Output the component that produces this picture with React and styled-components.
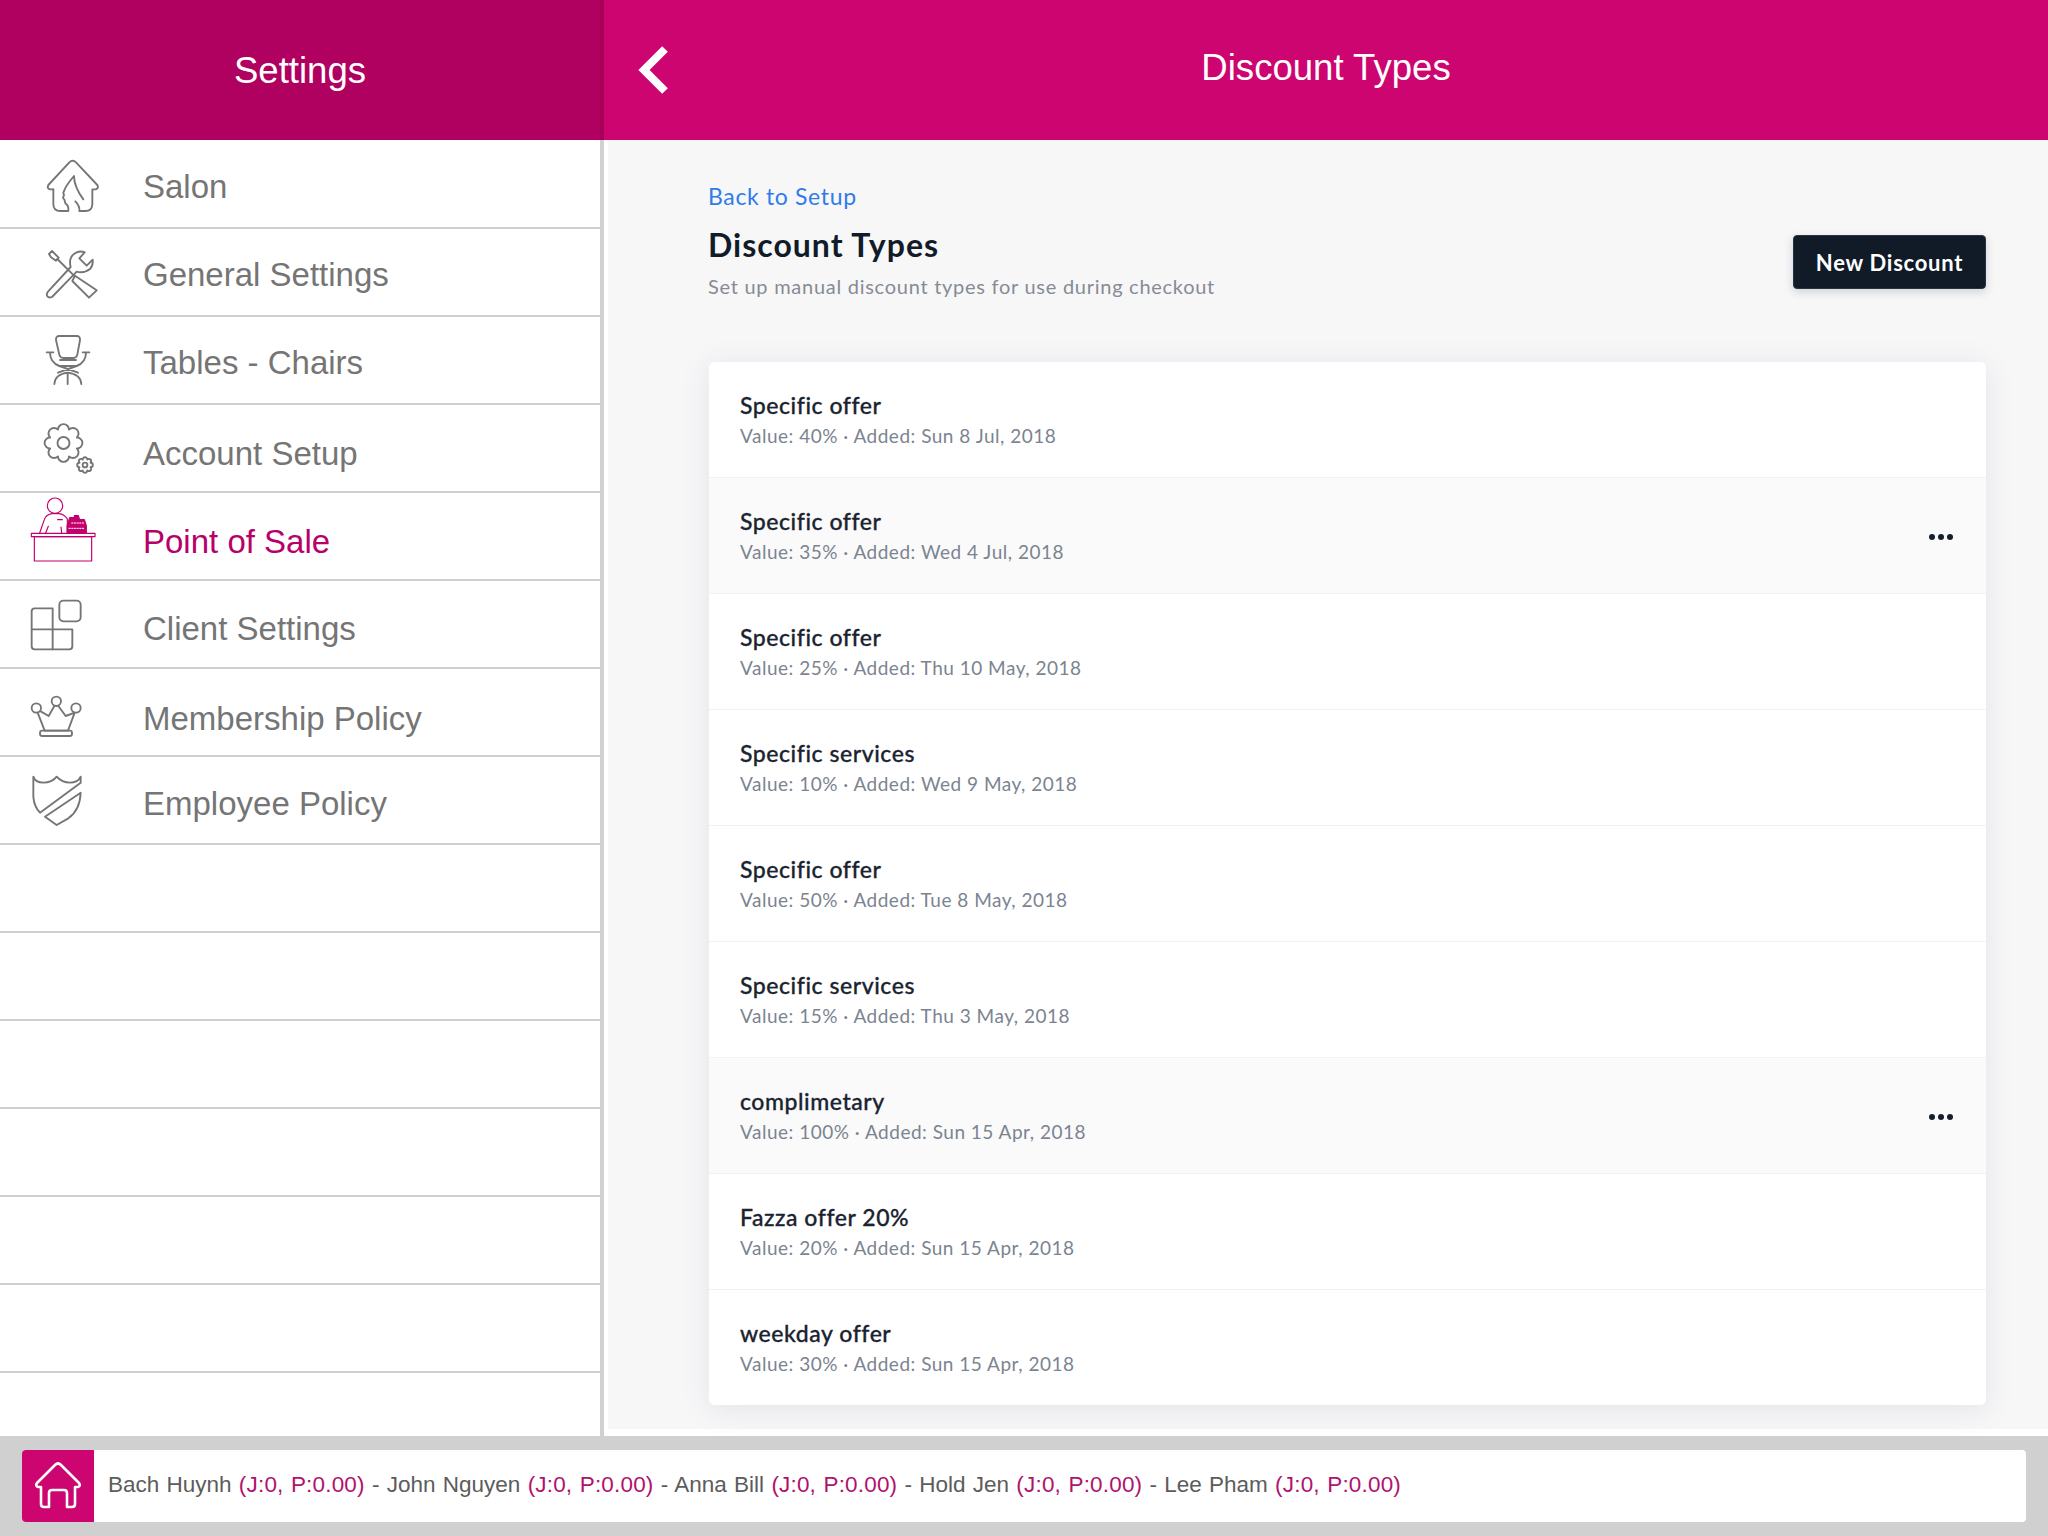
import React from "react";
import styled, { createGlobalStyle } from "styled-components";

const GlobalStyle = createGlobalStyle`
  html, body { margin: 0; padding: 0; background: #fff; }
  * { box-sizing: border-box; }
`;

const ui = `"Liberation Sans", Arial, sans-serif`;
const soft = `Lato, "Open Sans", sans-serif`;

const Page = styled.div`
  width: 2048px;
  height: 1536px;
  display: grid;
  grid-template-rows: 140px 1296px 100px;
  overflow: hidden;
  font-family: ${ui};
`;

const Header = styled.header`
  display: grid;
  grid-template-columns: 604px 1fr;
`;

const HeaderLeft = styled.div`
  display: flex;
  align-items: center;
  justify-content: center;
  background: #b00060;
  border-right: 4px solid #a80059;
  color: #fff;
  font-size: 36.6px;
  padding-top: 1px;
`;

const HeaderRight = styled.div`
  position: relative;
  display: flex;
  align-items: center;
  justify-content: center;
  background: #cc0570;
  color: #fff;
  font-size: 36.6px;
  padding-bottom: 5px;
`;

const BackArrow = styled.svg`
  position: absolute;
  left: 30px;
  top: 44px;
  width: 40px;
  height: 54px;
`;

const Body = styled.div`
  display: grid;
  grid-template-columns: 604px 1fr;
  min-height: 0;
`;

const Sidebar = styled.nav`
  border-right: 4px solid #d0d0d0;
  background: #fff;
  padding-top: 1px;
  overflow: hidden;
`;

const NavRow = styled.div`
  height: 88px;
  display: flex;
  align-items: center;
  border-bottom: 2px solid #cfcfcf;
`;

const NavIcon = styled.svg`
  flex: none;
  width: 143px;
  height: 88px;
  margin-top: -1px;
  fill: none;
  stroke: ${(p) => (p.$active ? "#c4006c" : "#757575")};
  stroke-width: ${(p) => p.$sw || 5.6};
  stroke-linecap: round;
  stroke-linejoin: round;
`;

const NavLabel = styled.span`
  font-size: 33px;
  color: ${(p) => (p.$active ? "#b8006a" : "#757575")};
  padding-top: ${(p) => p.$nudge}px;
`;

const MainWrap = styled.div`
  background: #fff;
  padding: 0 0 7px 4px;
  min-height: 0;
`;

const Main = styled.main`
  height: 100%;
  background: #f7f7f8;
  padding: 0 62px 0 101px;
  font-family: ${soft};
`;

const PageHead = styled.div`
  display: flex;
  justify-content: space-between;
  align-items: flex-start;
  height: 222px;
  padding-top: 41px;
`;

const BackLink = styled.a`
  display: block;
  margin-left: -1px;
  font-size: 23px;
  line-height: 30px;
  letter-spacing: 0.65px;
  color: #2f7ce8;
`;

const Title = styled.h1`
  margin: 15px 0 0 -1px;
  font-size: 32px;
  line-height: 38px;
  font-weight: 700;
  letter-spacing: 1px;
  color: #121b28;
`;

const Subtitle = styled.p`
  margin: 8px 0 0 -1px;
  font-size: 20px;
  line-height: 28px;
  letter-spacing: 0.73px;
  color: #868b94;
`;

const NewButton = styled.button`
  margin-top: 54px;
  width: 193px;
  height: 54px;
  border: 1px solid #2a3441;
  border-radius: 4px;
  background: #111a27;
  color: #fff;
  font-family: ${soft};
  font-size: 22px;
  font-weight: 700;
  letter-spacing: 0.75px;
  box-shadow: 0 3px 10px rgba(30, 40, 60, 0.18);
`;

const Card = styled.section`
  height: 1043px;
  background: #fff;
  border-radius: 6px;
  box-shadow: 0 4px 30px rgba(50, 60, 90, 0.1);
  overflow: hidden;
`;

const DiscountRow = styled.div`
  height: ${(p) => (p.$last ? 115 : 116)}px;
  display: flex;
  align-items: center;
  justify-content: space-between;
  padding: 0 33px 0 31px;
  background: ${(p) => (p.$hover ? "#fafafb" : "#fff")};
  border-bottom: ${(p) => (p.$last ? "none" : "1px solid #f1f2f4")};
`;

const RowName = styled.div`
  font-size: 23px;
  line-height: 30px;
  font-weight: 500;
  letter-spacing: 0.55px;
  -webkit-text-stroke: 0.3px #1a2330;
  color: #1a2330;
`;

const RowMeta = styled.div`
  margin-top: 2px;
  font-size: 19px;
  line-height: 28px;
  letter-spacing: 0.5px;
  color: #7b8490;
`;

const Dots = styled.div`
  display: flex;
  gap: 3px;
  margin-top: 2px;
`;

const Dot = styled.i`
  width: 6px;
  height: 6px;
  border-radius: 50%;
  background: #161f2c;
`;

const Footer = styled.footer`
  background: #d0d0d0;
  padding: 14px 22px;
`;

const FooterBar = styled.div`
  height: 72px;
  display: flex;
  align-items: center;
  background: #fff;
  border-radius: 4px;
  overflow: hidden;
`;

const HomeButton = styled.div`
  flex: none;
  width: 72px;
  height: 72px;
  background: #cc0570;
`;

const HomeIcon = styled.svg`
  display: block;
  width: 72px;
  height: 72px;
  fill: none;
  stroke: #fff;
  stroke-width: 2.6;
  stroke-linejoin: round;
  stroke-linecap: round;
`;

const StaffLine = styled.div`
  margin: 0 0 2px 14px;
  font-size: 22.5px;
  word-spacing: 1px;
  color: #5c5c5c;
`;

const Jobs = styled.span`
  letter-spacing: 0.18px;
  color: #b0126e;
`;

// small helper, the two cogs on Account Setup only differ by size
const cogPath = (cx, cy, r, bump, teeth) => {
  let d = "";
  for (let i = 0; i < teeth; i++) {
    const a = ((i - 0.5) * 2 * Math.PI) / teeth - Math.PI / 2;
    const b = ((i + 0.5) * 2 * Math.PI) / teeth - Math.PI / 2;
    const x1 = (cx + r * Math.cos(a)).toFixed(1);
    const y1 = (cy + r * Math.sin(a)).toFixed(1);
    const x2 = (cx + r * Math.cos(b)).toFixed(1);
    const y2 = (cy + r * Math.sin(b)).toFixed(1);
    d += `${i === 0 ? "M" : "L"}${x1} ${y1}A${bump} ${bump} 0 1 1 ${x2} ${y2}`;
  }
  return d + "Z";
};

const icons = {
  salon: (
    <NavIcon viewBox="0 30 429 264">
      <path d="M160 178H150Q140 176 145 165L208 97Q218 88 228 97L292 165Q297 176 287 178H277V222Q277 243 256 243H238Q240 228 226 214" />
      <path d="M160 178V222Q160 243 181 243H205Q207 226 196 220L193 208Q186 206 192 196L190 188Q196 168 222 138Q222 170 250 208" />
    </NavIcon>
  ),
  tools: (
    <NavIcon viewBox="-120 -51 429 264">
      <path d="M27 27L36 18L56 38L48 47L33 37Z" />
      <path d="M52 42L102 92" />
      <path d="M105 92L170 136L147 158L97 108Z" />
      <path d="M92 66Q84 34 110 22Q122 17 134 22L118 40L140 62L158 44Q160 62 150 72Q132 86 110 80L36 156Q26 160 21 152Q19 146 24 140Z" />
    </NavIcon>
  ),
  chair: (
    <NavIcon viewBox="0 558 429 264">
      <path d="M178 618H230Q241 618 240 630L232 674Q230 684 220 684H190Q180 684 178 674L168 630Q167 618 178 618Z" />
      <path d="M140 667H160M248 667H268M150 667Q150 698 178 708H230Q258 698 258 667" />
      <path d="M180 690L228 690M178 708L234 728M230 708L174 728" />
      <path d="M163 762Q165 733 203 728Q242 733 244 762M203 728V762" />
    </NavIcon>
  ),
  cog: (
    <NavIcon viewBox="0 0 143 88" $sw={1.9}>
      <path d={cogPath(63.5, 39, 14.5, 4.4, 8)} />
      <circle cx="63.5" cy="39" r="6" />
      <path d={cogPath(85, 61, 6, 1.9, 8)} />
      <circle cx="85" cy="61" r="2.4" />
    </NavIcon>
  ),
  register: (
    <NavIcon viewBox="-75 -9 429 264" $active $sw={3.5}>
      <circle cx="90" cy="32" r="23" />
      <path d="M44 114L58 74Q62 60 80 56H102Q118 58 127 72L127 88" />
      <path d="M62 114L70 94M110 114L108 96M98 74H112" />
      <rect x="19" y="115" width="191" height="10" />
      <rect x="28" y="125" width="172" height="73" />
      <path fill="#c4006c" d="M126 92L134 68H148V62H160L164 74H178L184 92V113H126Z" />
      <path d="M160 58H178M140 84H176M132 100H180" stroke="#fff" strokeWidth="3" strokeDasharray="4 4" />
    </NavIcon>
  ),
  blocks: (
    <NavIcon viewBox="0 360 429 264">
      <path d="M95 454Q95 445 104 445H158V568H104Q95 568 95 559Z" />
      <path d="M95 508H217V559Q217 568 208 568H158" />
      <rect x="178" y="422" width="64" height="62" rx="12" />
    </NavIcon>
  ),
  crown: (
    <NavIcon viewBox="0 624 429 264">
      <circle cx="109" cy="744" r="14" />
      <circle cx="169" cy="724" r="14" />
      <circle cx="228" cy="744" r="14" />
      <path d="M113 758L134 812H204L224 758L197 768L175 738M163 738L146 768L122 754" />
      <rect x="120" y="812" width="96" height="16" rx="7" />
    </NavIcon>
  ),
  shield: (
    <NavIcon viewBox="0 888 429 264">
      <path d="M100 950Q106 968 130 968Q156 968 170 950Q186 968 210 968Q234 968 242 950V968L120 1058Q102 1040 100 1010Z" />
      <path d="M135 1070L242 998Q240 1050 205 1075L170 1095Z" />
    </NavIcon>
  ),
};

const navItems = [
  { label: "Salon", icon: "salon", nudge: 6 },
  { label: "General Settings", icon: "tools", nudge: 6 },
  { label: "Tables - Chairs", icon: "chair", nudge: 6 },
  { label: "Account Setup", icon: "cog", nudge: 12 },
  { label: "Point of Sale", icon: "register", nudge: 12, active: true },
  { label: "Client Settings", icon: "blocks", nudge: 10 },
  { label: "Membership Policy", icon: "crown", nudge: 14 },
  { label: "Employee Policy", icon: "shield", nudge: 8 },
  {}, {}, {}, {}, {}, {}, {},
];

const discounts = [
  { name: "Specific offer", meta: "Value: 40% · Added: Sun 8 Jul, 2018" },
  { name: "Specific offer", meta: "Value: 35% · Added: Wed 4 Jul, 2018", hover: true },
  { name: "Specific offer", meta: "Value: 25% · Added: Thu 10 May, 2018" },
  { name: "Specific services", meta: "Value: 10% · Added: Wed 9 May, 2018" },
  { name: "Specific offer", meta: "Value: 50% · Added: Tue 8 May, 2018" },
  { name: "Specific services", meta: "Value: 15% · Added: Thu 3 May, 2018" },
  { name: "complimetary", meta: "Value: 100% · Added: Sun 15 Apr, 2018", hover: true },
  { name: "Fazza offer 20%", meta: "Value: 20% · Added: Sun 15 Apr, 2018" },
  { name: "weekday offer", meta: "Value: 30% · Added: Sun 15 Apr, 2018" },
];

const staff = ["Bach Huynh", "John Nguyen", "Anna Bill", "Hold Jen", "Lee Pham"];

const App = () => {
  return (
    <Page>
      <GlobalStyle />
      <Header>
        <HeaderLeft>Settings</HeaderLeft>
        <HeaderRight>
          <BackArrow viewBox="0 0 40 54">
            <path d="M31 5L10 26L31 47" fill="none" stroke="#fff" strokeWidth="8" />
          </BackArrow>
          Discount Types
        </HeaderRight>
      </Header>

      <Body>
        <Sidebar>
          {navItems.map((item, i) => (
            <NavRow key={i}>
              {item.icon && icons[item.icon]}
              {item.label && (
                <NavLabel $active={item.active} $nudge={item.nudge}>
                  {item.label}
                </NavLabel>
              )}
            </NavRow>
          ))}
        </Sidebar>

        <MainWrap>
          <Main>
            <PageHead>
              <div>
                <BackLink>Back to Setup</BackLink>
                <Title>Discount Types</Title>
                <Subtitle>Set up manual discount types for use during checkout</Subtitle>
              </div>
              <NewButton>New Discount</NewButton>
            </PageHead>

            <Card>
              {discounts.map((item, i) => (
                <DiscountRow key={i} $hover={item.hover} $last={i === discounts.length - 1}>
                  <div>
                    <RowName>{item.name}</RowName>
                    <RowMeta>{item.meta}</RowMeta>
                  </div>
                  {item.hover && (
                    <Dots>
                      <Dot />
                      <Dot />
                      <Dot />
                    </Dots>
                  )}
                </DiscountRow>
              ))}
            </Card>
          </Main>
        </MainWrap>
      </Body>

      <Footer>
        <FooterBar>
          <HomeButton>
            <HomeIcon viewBox="0 0 72 72">
              <path d="M19 37H16Q13 36 15 33L33 15Q36 12 39 15L57 33Q59 36 56 37H53V54Q53 57 50 57H45V43Q45 40 42 40H30Q27 40 27 43V57H22Q19 57 19 54Z" />
            </HomeIcon>
          </HomeButton>
          <StaffLine>
            {staff.map((name, i) => (
              <React.Fragment key={name}>
                {i > 0 && " - "}
                {name} <Jobs>(J:0, P:0.00)</Jobs>
              </React.Fragment>
            ))}
          </StaffLine>
        </FooterBar>
      </Footer>
    </Page>
  );
};

export default App;
